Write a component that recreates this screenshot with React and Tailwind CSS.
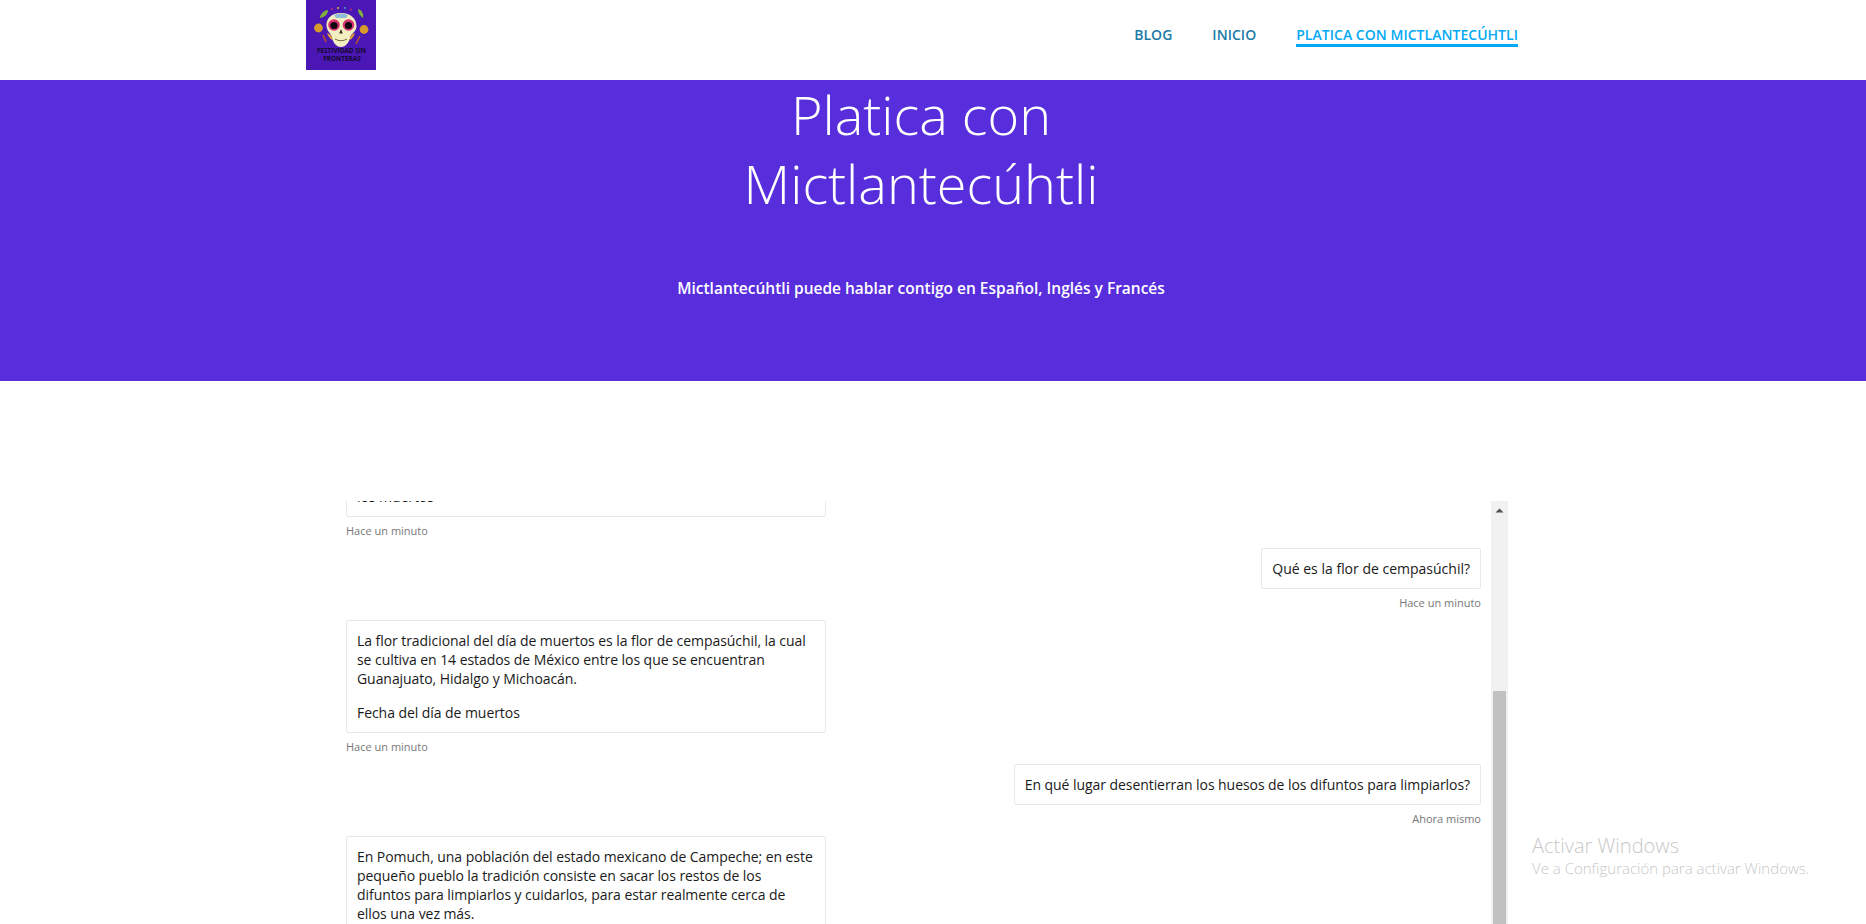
const openSans = { fontFamily: '"Open Sans", sans-serif' }

function Logo() {
  return (
    <svg width="70" height="70" viewBox="0 0 70 70" className="block">
      <rect width="70" height="70" fill="#4a17b5" />
      {/* leaves */}
      <path d="M14 17 C15 13 19 10 22 10 C22 14 19 17 14 18 Z" fill="#7fb23c" />
      <path d="M52 9 C56 10 58 14 57 18 C54 16 52 13 52 9 Z" fill="#7fb23c" />
      {/* marigolds */}
      <circle cx="12.5" cy="28" r="4.4" fill="#d89a2a" />
      <circle cx="58" cy="29.5" r="4.4" fill="#d89a2a" />
      {/* dots */}
      <circle cx="26" cy="9" r="1" fill="#c2306f" />
      <circle cx="32" cy="8" r="1" fill="#e3c12f" />
      <circle cx="39" cy="8" r="1" fill="#3aa0c9" />
      <circle cx="45" cy="9.5" r="1" fill="#c2306f" />
      {/* sparks */}
      <path d="M17 35 L20 42" stroke="#c2561f" strokeWidth="1.4" />
      <path d="M54 36 L50 44" stroke="#c2561f" strokeWidth="1.4" />
      {/* skull */}
      <path d="M35 13 C25 13 20 19 20.5 26 C21 31 24 33 25.5 36 C26.5 42 30 47 35 47 C40 47 43.5 42 44.5 36 C46.5 33 50.5 31 50.5 26 C50.5 19 45 13 35 13 Z" fill="#f3efc0" />
      <path d="M21 33 C24 34 26 36 26.5 40 C24 39 22 36 21 33 Z" fill="#e5a52c" />
      <path d="M49 33 C46 34 44 36 43.5 40 C46 39 48 36 49 33 Z" fill="#e5a52c" />
      <path d="M28 15 Q35 12 42 15 L40 18 L30 18 Z" fill="#8fbcd8" />
      <circle cx="28" cy="25" r="5.8" fill="#d8326f" />
      <circle cx="42.5" cy="25" r="5.8" fill="#d8326f" />
      <circle cx="28" cy="25.5" r="3.6" fill="#0d0810" />
      <circle cx="42.5" cy="25.5" r="3.6" fill="#0d0810" />
      <path d="M35 29 L33.2 33.5 L36.8 33.5 Z" fill="#3a2a20" />
      <path d="M29 39 Q35 42.5 41 39" stroke="#6d6a3a" strokeWidth="1" fill="none" />
      {/* caption */}
      <text x="35.5" y="53" textAnchor="middle" fontSize="6.4" fontWeight="700" fill="#14082c" fontFamily="Open Sans, sans-serif">FESTIVIDAD SIN</text>
      <text x="36" y="61" textAnchor="middle" fontSize="6.4" fontWeight="700" fill="#14082c" fontFamily="Open Sans, sans-serif">FRONTERAS</text>
    </svg>
  )
}

function Header() {
  return (
    <header className="h-[80px] bg-white flex items-start pl-[306px] pr-[348px]">
      <Logo />
      <nav className="ml-auto flex items-start gap-10 pt-[25px] text-[14px] font-semibold leading-[19px] tracking-[0.03px]">
        <a className="text-[#1b7ba6]">BLOG</a>
        <a className="text-[#1b7ba6]">INICIO</a>
        <a className="text-[#03a9f4] border-b-[3px] border-[#03a9f4]">PLATICA CON MICTLANTECÚHTLI</a>
      </nav>
    </header>
  )
}

function Hero() {
  return (
    <section className="h-[301px] bg-[#582ddb] text-white flex flex-col items-center pr-[24px]">
      <h1 className="text-[54px] leading-[69px] font-light text-center">
        Platica con<br />Mictlantecúhtli
      </h1>
      <p className="mt-[59px] text-[15.5px] font-semibold leading-[22px]">
        Mictlantecúhtli puede hablar contigo en Español, Inglés y Francés
      </p>
    </section>
  )
}

function Bubble({ side = 'left', time, children }) {
  const right = side === 'right'
  return (
    <div className={right ? 'flex flex-col items-end' : 'flex flex-col items-start'}>
      <div className={right
        ? 'bg-white border border-[#e8e8e8] rounded-[2px] p-[10px] text-[14px] leading-[19px] tracking-[-0.06px] text-[#1a1a1a]'
        : 'w-[480px] bg-white border border-[#e8e8e8] rounded-[2px] p-[10px] text-[14px] leading-[19px] tracking-[-0.06px] text-[#1a1a1a]'}>
        {children}
      </div>
      <span className="mt-[6px] h-[17px] text-[11px] leading-[15px] text-[#777777]">{time}</span>
    </div>
  )
}

function Scrollbar() {
  return (
    <div className="w-[17px] ml-[10px] h-full bg-[#f1f1f1] flex flex-col items-center">
      <svg width="9" height="5" viewBox="0 0 9 5" className="mt-[7px]">
        <path d="M4.5 0.5 L8.5 4.5 L0.5 4.5 Z" fill="#505050" />
      </svg>
      <div className="w-[13px] mt-[178px] flex-1 bg-[#c1c1c1]" />
    </div>
  )
}

function Chat() {
  return (
    <section className="mt-[120px] ml-[346px] w-[1162px] h-[423px] flex">
      <div className="w-[1135px] h-full overflow-hidden">
        <div className="mt-[-44px] flex flex-col gap-[8px]">
          <Bubble time="Hace un minuto">
            se celebra el día de<br />los muertos
          </Bubble>
          <Bubble side="right" time="Hace un minuto">
            <span className="tracking-normal">Qué es la flor de cempasúchil?</span>
          </Bubble>
          <Bubble time="Hace un minuto">
            La flor tradicional del día de muertos es la flor de cempasúchil, la cual se cultiva en 14 estados de México entre los que se encuentran Guanajuato, Hidalgo y Michoacán.
            <p className="mt-[15px]">Fecha del día de muertos</p>
          </Bubble>
          <Bubble side="right" time="Ahora mismo">En qué lugar desentierran los huesos de los difuntos para limpiarlos?</Bubble>
          <Bubble time="Ahora mismo">
            En Pomuch, una población del estado mexicano de Campeche; en este pequeño pueblo la tradición consiste en sacar los restos de los difuntos para limpiarlos y cuidarlos, para estar realmente cerca de ellos una vez más.
          </Bubble>
        </div>
      </div>
      <Scrollbar />
    </section>
  )
}

export default function App() {
  return (
    <div className="relative h-screen overflow-hidden bg-white" style={openSans}>
      <Header />
      <Hero />
      <Chat />
      {/* Windows activation watermark */}
      <div className="absolute left-[1532px] top-[832px] text-[#c8c8c8]">
        <p className="text-[20px] leading-[27px] font-light">Activar Windows</p>
        <p className="text-[15px] leading-[19px] font-light">Ve a Configuración para activar Windows.</p>
      </div>
    </div>
  )
}
